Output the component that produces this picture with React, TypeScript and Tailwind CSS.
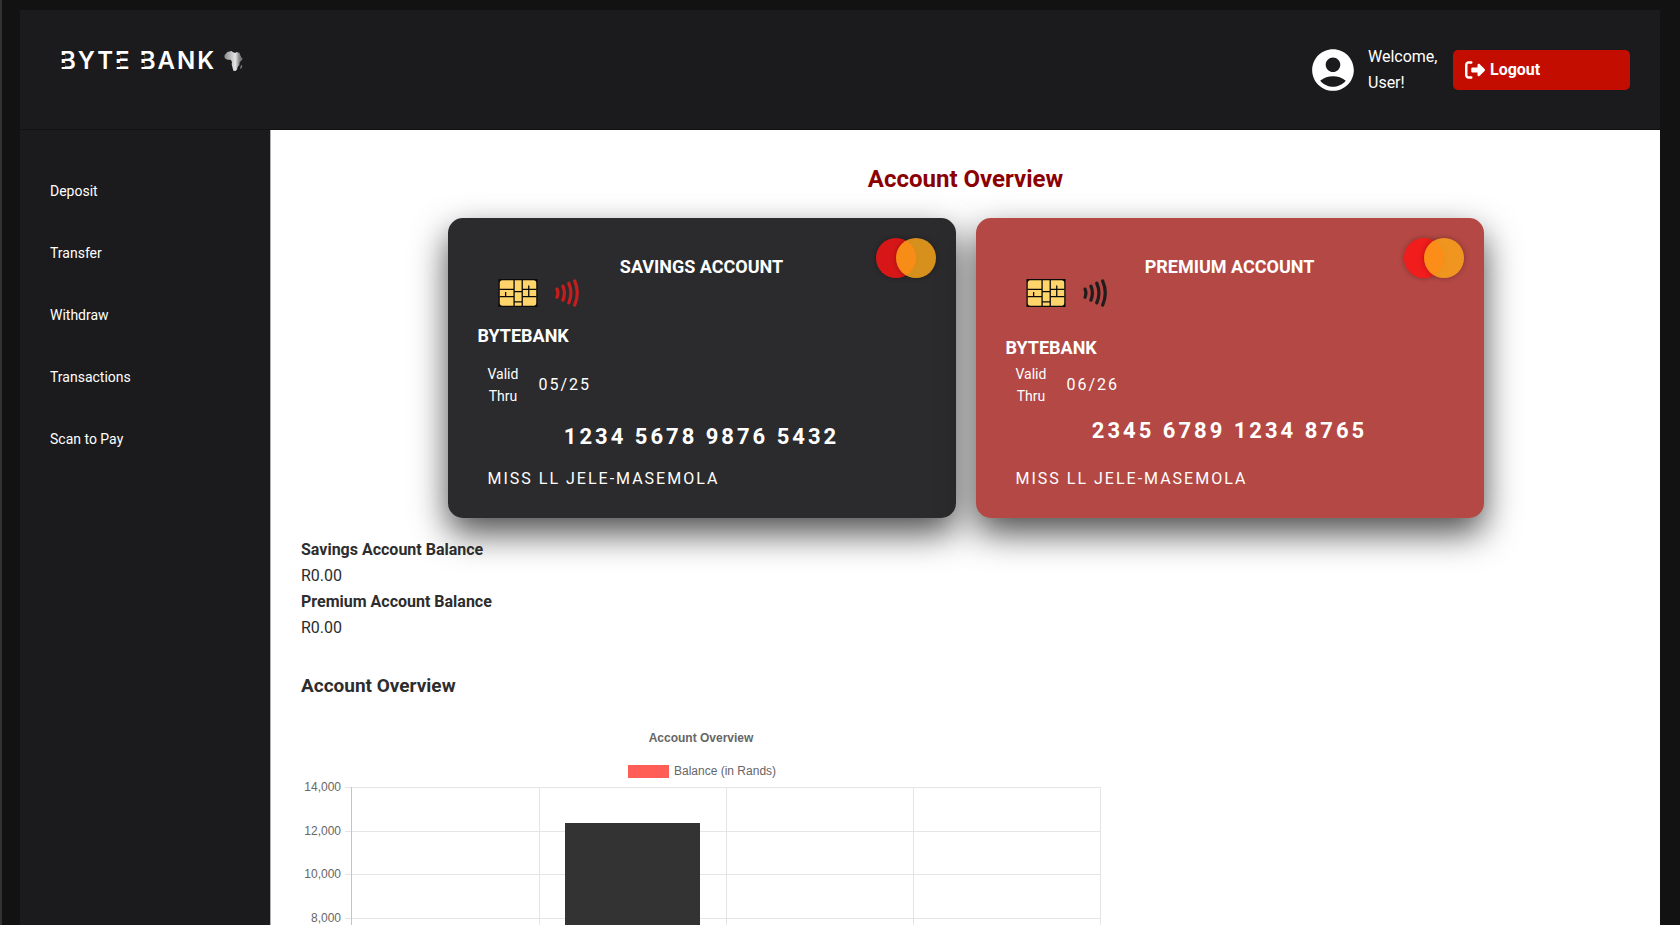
import { FaRightFromBracket } from "react-icons/fa6";
import { MdAccountCircle } from "react-icons/md";

const navItems = ["Deposit", "Transfer", "Withdraw", "Transactions", "Scan to Pay"];

function AfricaIcon() {
  return (
    <svg viewBox="0 0 55 60" className="h-5 w-[19px]" aria-hidden="true">
      <defs>
        <linearGradient id="africa" x1="0" x2="1" y1="0" y2="0">
          <stop offset="0" stopColor="#8a8a8a" />
          <stop offset="0.25" stopColor="#b0b0b0" />
          <stop offset="0.6" stopColor="#e6e6e6" />
          <stop offset="0.8" stopColor="#8c8c8c" />
          <stop offset="1" stopColor="#6a6a6a" />
        </linearGradient>
      </defs>
      <path
        fill="url(#africa)"
        d="M9 3L22 0L25 3L33 6L36 3L45 5L49 15L52 21L55 21L53 27L46 34L45 42L40 48L38 56L33 60L27 59L24 48L22 40L23 33L20 28L19 26L11 26L4 24L0 18L1 12ZM50 43L54 42L52 52L48 54L48 48Z"
      />
    </svg>
  );
}

/* Opens the stem of a letter between its horizontal bars. */
function StencilLetter({ children }: { children: string }) {
  return (
    <span className="[clip-path:polygon(0_0,100%_0,100%_100%,0_100%,0_18px,5px_18px,5px_14px,0_14px,0_10px,5px_10px,5px_6px,0_6px)]">
      {children}
    </span>
  );
}

function Logo() {
  return (
    <a href="#" aria-label="Byte Bank" className="flex items-center gap-2">
      <span className="flex font-['Inter',sans-serif] text-2xl leading-6 font-semibold tracking-[2px] text-white">
        <StencilLetter>B</StencilLetter>YT
        <StencilLetter>E</StencilLetter>
        <span className="whitespace-pre"> </span>
        <StencilLetter>B</StencilLetter>ANK
      </span>
      <AfricaIcon />
    </a>
  );
}

function Chip() {
  return (
    <svg viewBox="0 0 120 86" className="h-7 w-10" aria-hidden="true">
      <rect width="120" height="86" fill="#0a0a0a" />
      <rect x="4" y="4" width="112" height="78" rx="8" fill="#ffd46a" />
      <path
        fill="none"
        stroke="#0a0a0a"
        strokeWidth="4"
        d="M48 3V83M73 3V83M3 32H48M3 54H48M22 40V54M48 39H73M48 70H73M73 32H117M73 54H117M93 20V54"
      />
    </svg>
  );
}

function Contactless({ color }: { color: string }) {
  return (
    <svg viewBox="0 0 76 86" className="h-7 w-[25px]" fill="none" stroke={color} strokeWidth="10" strokeLinecap="round" aria-hidden="true">
      <path d="M6 31Q11 43 6 56M24 22Q33 43 24 65M42 13Q55 43 42 73M60 6Q76 43 60 80" />
    </svg>
  );
}

type CardProps = {
  title: string;
  expiry: string;
  number: string;
  cardClass: string;
  brandClass: string;
  numberClass: string;
  waveColor: string;
};

function BankCard({ title, expiry, number, cardClass, brandClass, numberClass, waveColor }: CardProps) {
  return (
    <section
      className={`relative h-[300px] w-[508px] rounded-[15px] px-[30px] pt-[37px] text-white shadow-[0_15px_35px_rgba(0,0,0,0.7)] ${cardClass}`}
    >
      <div className="absolute top-5 right-5 flex" aria-hidden="true">
        <span className="size-10 rounded-full bg-[rgba(255,18,18,0.81)] shadow-[0_0_5px_rgba(0,0,0,0.3)]" />
        <span className="-ml-5 size-10 rounded-full bg-[rgba(254,167,24,0.81)] shadow-[0_0_5px_rgba(0,0,0,0.3)]" />
      </div>
      <h3 className="text-center text-lg leading-6 font-bold">{title}</h3>
      <div className="flex gap-[17px] pl-5">
        <Chip />
        <Contactless color={waveColor} />
      </div>
      <h4 className={`text-lg leading-7 font-bold ${brandClass}`}>BYTEBANK</h4>
      <div className="flex items-center gap-5 pl-[10px]">
        <p className="text-center text-sm leading-[22px]">
          Valid
          <br />
          Thru
        </p>
        <p className="text-base tracking-[2px]">{expiry}</p>
      </div>
      <p className={`text-center text-[22px] leading-8 font-bold tracking-[3px] ${numberClass}`}>{number}</p>
      <p className="pl-[10px] text-base leading-6 tracking-[2px]">MISS LL JELE-MASEMOLA</p>
    </section>
  );
}

const ticks = ["14,000", "12,000", "10,000", "8,000"];
const columns = [50, 238, 425, 612, 799];

function BalanceChart() {
  return (
    <svg
      viewBox="0 0 801 400"
      className="h-[400px] w-[801px] shrink-0 font-['Liberation_Sans',Arial,sans-serif] text-xs"
      role="img"
      aria-label="Account Overview"
      fill="#666666"
    >
      <text x="400" y="22" textAnchor="middle" className="font-bold">
        Account Overview
      </text>
      <rect x="327" y="45" width="41" height="13" fill="#ff5e57" />
      <text x="373" y="55">Balance (in Rands)</text>
      {ticks.map((label, i) => {
        const y = 67 + Math.round(i * 43.5);
        return (
          <g key={label}>
            <rect x="44" y={y} width="756" height="1" fill="#e5e5e5" />
            <text x="40" y={y + 4} textAnchor="end">
              {label}
            </text>
          </g>
        );
      })}
      {columns.map((x, i) => (
        <rect key={x} x={x} y="67" width="1" height="312" fill={i === 0 ? "#c4c4c4" : "#e5e5e5"} />
      ))}
      <rect x="264" y="103" width="135" height="269" fill="#333333" />
    </svg>
  );
}

export default function App() {
  return (
    <div className="flex h-screen flex-col overflow-hidden border-l-2 border-[#333333] bg-[#121212] pt-[10px] pr-5 pl-[18px] font-['Roboto',sans-serif]">
      <div className="flex min-h-0 flex-1 flex-col bg-[#1b1b1d]">
        <header className="flex h-[120px] shrink-0 items-start justify-between border-b border-[#121212] pt-[34px] pr-[30px] pl-10">
          <div className="pt-[5px]">
            <Logo />
          </div>
          <div className="flex items-center text-white">
            <MdAccountCircle className="size-[50px]" aria-hidden="true" />
            <p className="ml-[10px] w-[85px] text-base leading-[26px]">Welcome, User!</p>
            <button type="button" className="flex h-10 w-[177px] items-center gap-[5px] rounded-[5px] bg-[#c30d00] px-3 text-base font-bold">
              <FaRightFromBracket className="size-5" aria-hidden="true" />
              Logout
            </button>
          </div>
        </header>
        <div className="flex min-h-0 flex-1">
          <nav className="w-[250px] shrink-0 px-[30px] pt-[50px]">
            <ul className="flex flex-col gap-10">
              {navItems.map((item) => (
                <li key={item} className="leading-[22px]">
                  <a href="#" className="text-sm leading-[22px] text-white">
                    {item}
                  </a>
                </li>
              ))}
            </ul>
          </nav>
          <main className="flex min-w-0 flex-1 flex-col overflow-hidden border-l border-[#b0b0b0] bg-white px-[30px] pt-[29px] text-[#2d2d2d]">
            <h1 className="text-center text-2xl leading-10 font-bold text-[#8b0000]">Account Overview</h1>
            <div className="mt-[19px] flex justify-center gap-5">
              <BankCard
                title="SAVINGS ACCOUNT"
                expiry="05/25"
                number="1234 5678 9876 5432"
                cardClass="bg-[#2b2b2d]"
                brandClass="mt-[15px] mb-[13px]"
                numberClass="mt-[14px] mb-[14px]"
                waveColor="#c41e1e"
              />
              <BankCard
                title="PREMIUM ACCOUNT"
                expiry="06/26"
                number="2345 6789 1234 8765"
                cardClass="bg-[#b34844]"
                brandClass="mt-[27px] mb-px"
                numberClass="mt-[8px] mb-[20px]"
                waveColor="#231c1d"
              />
            </div>
            <dl className="relative mt-[19px] text-base leading-[26px]">
              <dt className="font-bold">Savings Account Balance</dt>
              <dd>R0.00</dd>
              <dt className="font-bold">Premium Account Balance</dt>
              <dd>R0.00</dd>
            </dl>
            <h2 className="mt-[30px] mb-[19px] text-[19px] leading-[30px] font-bold">Account Overview</h2>
            <BalanceChart />
          </main>
        </div>
      </div>
    </div>
  );
}
